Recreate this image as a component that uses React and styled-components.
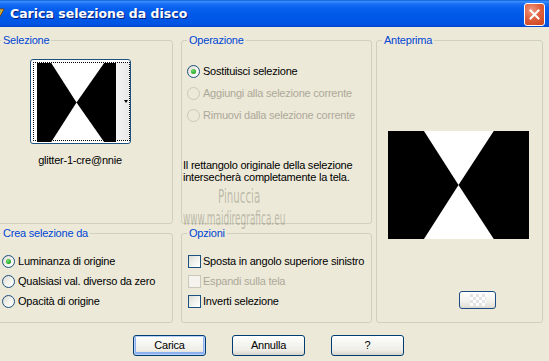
import React from 'react';
import styled, { createGlobalStyle } from 'styled-components';

const Global = createGlobalStyle`
  html, body {
    margin: 0;
    padding: 0;
    width: 549px;
    height: 361px;
    overflow: hidden;
    background: #ece9d8;
  }
  body {
    font-family: "Liberation Sans", Arial, sans-serif;
    font-size: 11px;
    letter-spacing: -0.22px;
    color: #000;
  }
`;

const Window = styled.div`
  width: 549px;
  height: 361px;
  background: #ece9d8;
  position: relative;
  overflow: hidden;
`;

const TitleBar = styled.div`
  height: 27px;
  display: flex;
  align-items: center;
  background: linear-gradient(to bottom, #0a5fdb 0%, #3d8ffb 6%, #1a6ff5 14%, #0760ee 30%, #0058e8 60%, #0055e3 88%, #0046d0 100%);
  padding-right: 4px;
`;

const AppIcon = styled.svg`
  width: 16px;
  height: 16px;
  margin-left: -10px;
  flex: none;
`;

const TitleText = styled.div`
  flex: 1;
  margin-left: 4px;
  color: #fff;
  font-family: "DejaVu Sans", sans-serif;
  font-weight: bold;
  font-size: 12.5px;
  letter-spacing: 0;
  text-shadow: 1px 1px 0 #0a1f7a;
  white-space: nowrap;
`;

const CloseButton = styled.div`
  width: 19px;
  height: 21px;
  margin-top: 1px;
  border: 1px solid #fff;
  border-radius: 3px;
  background: radial-gradient(circle at 35% 30%, #f09a82 0%, #e0613e 45%, #c8401c 100%);
  display: flex;
  align-items: center;
  justify-content: center;
`;

const Body = styled.div`
  padding-top: 7px;
  position: relative;
`;

const Groups = styled.div`
  display: grid;
  grid-template-columns: 186px 195px 167px;
  grid-template-rows: 190px 96px;
  row-gap: 3px;
  grid-template-areas:
    "sel op prev"
    "crea opz prev";
  margin-left: -5px;
`;

const Group = styled.fieldset`
  grid-area: ${(p) => p.$area};
  width: ${(p) => p.$w}px;
  box-sizing: border-box;
  margin: 0;
  padding: 0;
  min-width: 0;
  border: 1px solid #d0d0bf;
  border-radius: 3px;
  height: 100%;
`;

const Legend = styled.legend`
  margin-left: 5px;
  padding: 0 2px;
  line-height: 13px;
  color: #0046d5;
`;

const SelContent = styled.div`
  display: flex;
  flex-direction: column;
  align-items: center;
  padding: 12px 8px 0 0;
`;

const Thumb = styled.div`
  width: 101px;
  height: 85px;
  box-sizing: border-box;
  border: 1px solid #1c5180;
  border-radius: 3px;
  background: #fff;
  padding: 2px;
  display: flex;
`;

const ThumbInner = styled.div`
  flex: 1;
  display: flex;
  align-items: stretch;
  outline: 1px dotted #000;
  outline-offset: -1px;
  padding: 1px 1px 1px 4px;
`;

const ThumbArrow = styled.div`
  width: 12px;
  background: linear-gradient(to right, #f4f4f4, #e8e8e8);
  display: flex;
  align-items: center;
  justify-content: flex-end;
  padding-right: 1px;
  &::after {
    content: "";
    border-left: 2.5px solid transparent;
    border-right: 2.5px solid transparent;
    border-top: 3px solid #000;
  }
`;

const FileName = styled.div`
  margin-top: 10px;
  line-height: 13px;
`;

const OptionList = styled.div`
  display: flex;
  flex-direction: column;
  padding: ${(p) => p.$top}px 0 0 ${(p) => p.$left}px;
`;

const OptionRow = styled.label`
  display: flex;
  align-items: center;
  height: ${(p) => p.$h}px;
  gap: ${(p) => p.$gap}px;
  color: ${(p) => (p.$disabled ? '#aca899' : '#000')};
  white-space: nowrap;
`;

const Radio = styled.span`
  width: 13px;
  height: 13px;
  box-sizing: border-box;
  border-radius: 50%;
  border: 1px solid ${(p) => (p.$disabled ? '#cac8bb' : '#1c5180')};
  background: ${(p) =>
    p.$disabled
      ? '#ece9d8'
      : 'linear-gradient(135deg, #dcdad0 0%, #f4f4f0 55%, #ffffff 100%)'};
  display: flex;
  align-items: center;
  justify-content: center;
  flex: none;
  &::after {
    content: "";
    display: ${(p) => (p.$checked ? 'block' : 'none')};
    width: 5px;
    height: 5px;
    border-radius: 50%;
    background: radial-gradient(circle at 40% 35%, #7ae07a 0%, #2fb02f 55%, #1a8a1a 100%);
  }
`;

const Check = styled.span`
  width: 13px;
  height: 13px;
  box-sizing: border-box;
  border: 1px solid ${(p) => (p.$disabled ? '#cac8bb' : '#1c5180')};
  background: ${(p) =>
    p.$disabled ? '#f4f3ee' : 'linear-gradient(135deg, #dcdcd4 0%, #f2f2ee 50%, #ffffff 100%)'};
  flex: none;
`;

const Info = styled.div`
  margin-top: 33px;
  padding-left: 1px;
  line-height: 12px;
`;

const PreviewContent = styled.div`
  display: flex;
  flex-direction: column;
  padding: 84px 0 0 11px;
`;

const PreviewImage = styled.svg`
  width: 141px;
  height: 108px;
  display: block;
`;

const SmallButton = styled.div`
  width: 37px;
  height: 18px;
  box-sizing: border-box;
  margin: 52px 0 0 71px;
  border: 1px solid #1c4a85;
  border-radius: 3px;
  background: linear-gradient(to bottom, #ffffff, #f1f1ec 60%, #dedbd0);
  display: flex;
  align-items: center;
  justify-content: center;
`;

const Checker = styled.div`
  width: 16px;
  height: 12px;
  background:
    repeating-conic-gradient(#ffffff 0 25%, #e4e4e4 0 50%) 0 0 / 6px 6px;
`;

const Watermark = styled.div`
  position: absolute;
  left: 183px;
  top: 160px;
  color: rgba(120, 116, 102, 0.42);
  font-family: "DejaVu Sans Condensed", "Liberation Sans", sans-serif;
  letter-spacing: 0;
  pointer-events: none;
  display: flex;
  flex-direction: column;
  align-items: flex-start;
`;

const WmName = styled.div`
  font-size: 15px;
  line-height: 15px;
  margin-left: 35px;
  transform: scale(0.76, 1.35);
  transform-origin: left top;
`;

const WmUrl = styled.div`
  font-size: 16px;
  line-height: 16px;
  margin-top: 7px;
  white-space: nowrap;
  transform: scale(0.62, 1.2);
  transform-origin: left top;
`;

const ButtonRow = styled.div`
  display: flex;
  gap: 26px;
  padding: 12px 0 0 133px;
`;

const Button = styled.div`
  width: 73px;
  height: 21px;
  box-sizing: border-box;
  border: 1px solid #003c74;
  border-radius: 3px;
  background: linear-gradient(to bottom, #ffffff 0%, #f6f6f3 35%, #eeede7 75%, #d8d3c8 100%);
  box-shadow: ${(p) => (p.$default ? 'inset 0 0 0 1px #b9d1f6, inset 0 -1px 0 2px #8eb0ee' : 'none')};
  display: flex;
  align-items: center;
  justify-content: center;
  line-height: 13px;
`;

const Bowtie = ({ lo, hi }) => (
  <>
    <rect x="0" y="0" width="100" height="100" fill="#000" />
    <polygon points={`${lo},0 ${hi},0 50,50`} fill="#fff" />
    <polygon points={`${lo},100 ${hi},100 50,50`} fill="#fff" />
  </>
);

export default function App() {
  return (
    <Window>
      <Global />
      <TitleBar>
        <AppIcon viewBox="0 0 16 16">
          <path d="M2 3 L14 3 L8 14 Z" fill="#e8b83a" stroke="#7a4a10" strokeWidth="1" />
          <path d="M5 5 L11 5 L8 10 Z" fill="#2f9a3a" />
        </AppIcon>
        <TitleText>Carica selezione da disco</TitleText>
        <CloseButton>
          <svg width="11" height="11" viewBox="0 0 11 11">
            <path d="M1.5 1.5 L9.5 9.5 M9.5 1.5 L1.5 9.5" stroke="#fff" strokeWidth="2" strokeLinecap="square" />
          </svg>
        </CloseButton>
      </TitleBar>
      <Body>
        <Groups>
          <Group $area="sel" $w={178}>
            <Legend>Selezione</Legend>
            <SelContent>
              <Thumb>
                <ThumbInner>
                  <svg width="79" height="79" viewBox="0 0 100 100" preserveAspectRatio="none">
                    <Bowtie lo={18} hi={85} />
                  </svg>
                  <ThumbArrow />
                </ThumbInner>
              </Thumb>
              <FileName>glitter-1-cre@nnie</FileName>
            </SelContent>
          </Group>

          <Group $area="op" $w={191}>
            <Legend>Operazione</Legend>
            <OptionList $top={13} $left={5}>
              <OptionRow $h={22} $gap={3}>
                <Radio $checked />
                Sostituisci selezione
              </OptionRow>
              <OptionRow $h={22} $gap={3} $disabled>
                <Radio $disabled />
                Aggiungi alla selezione corrente
              </OptionRow>
              <OptionRow $h={22} $gap={3} $disabled>
                <Radio $disabled />
                Rimuovi dalla selezione corrente
              </OptionRow>
            </OptionList>
            <Info>
              Il rettangolo originale della selezione
              <br />
              intersecherà completamente la tela.
            </Info>
          </Group>

          <Group $area="prev" $w={167}>
            <Legend>Anteprima</Legend>
            <PreviewContent>
              <PreviewImage viewBox="0 0 100 100" preserveAspectRatio="none">
                <Bowtie lo={25.5} hi={75} />
              </PreviewImage>
              <SmallButton>
                <Checker />
              </SmallButton>
            </PreviewContent>
          </Group>

          <Group $area="crea" $w={178}>
            <Legend>Crea selezione da</Legend>
            <OptionList $top={11} $left={6}>
              <OptionRow $h={20} $gap={3}>
                <Radio $checked />
                Luminanza di origine
              </OptionRow>
              <OptionRow $h={20} $gap={3}>
                <Radio />
                Qualsiasi val. diverso da zero
              </OptionRow>
              <OptionRow $h={20} $gap={3}>
                <Radio />
                Opacità di origine
              </OptionRow>
            </OptionList>
          </Group>

          <Group $area="opz" $w={191}>
            <Legend>Opzioni</Legend>
            <OptionList $top={11} $left={6}>
              <OptionRow $h={20} $gap={2}>
                <Check />
                Sposta in angolo superiore sinistro
              </OptionRow>
              <OptionRow $h={20} $gap={2} $disabled>
                <Check $disabled />
                Espandi sulla tela
              </OptionRow>
              <OptionRow $h={20} $gap={2}>
                <Check />
                Inverti selezione
              </OptionRow>
            </OptionList>
          </Group>
        </Groups>

        <Watermark>
          <WmName>Pinuccia</WmName>
          <WmUrl>www.maidiregrafica.eu</WmUrl>
        </Watermark>

        <ButtonRow>
          <Button $default>Carica</Button>
          <Button>Annulla</Button>
          <Button>?</Button>
        </ButtonRow>
      </Body>
    </Window>
  );
}
